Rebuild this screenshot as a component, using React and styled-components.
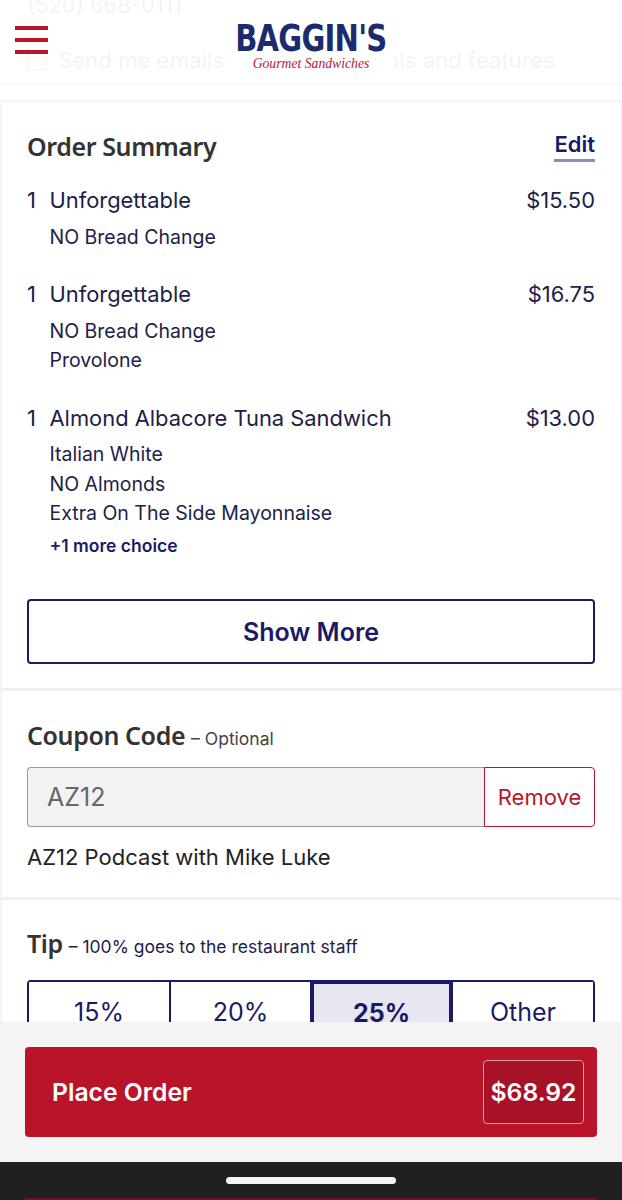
import React from "react";
import styled, { createGlobalStyle } from "styled-components";

const GlobalStyle = createGlobalStyle`
	html, body {
		margin: 0;
		padding: 0;
		background: #ffffff;
	}
	* {
		box-sizing: border-box;
	}
`;

const NAVY = "#1a1a66";
const RED = "#b91429";
const TEXT = "#1c2148";

const items = [
	{ name: "Unforgettable", price: "$15.50", choices: ["NO Bread Change"] },
	{ name: "Unforgettable", price: "$16.75", choices: ["NO Bread Change", "Provolone"] },
	{
		name: "Almond Albacore Tuna Sandwich",
		price: "$13.00",
		choices: ["Italian White", "NO Almonds", "Extra On The Side Mayonnaise"],
		more: "+1 more choice"
	}
];

const tips = [
	{ label: "15%" },
	{ label: "20%" },
	{ label: "25%", selected: true },
	{ label: "Other" }
];

const Screen = styled.div`
	position: relative;
	width: 622px;
	height: 1200px;
	overflow: hidden;
	background: #ffffff;
	font-family: Inter, "Liberation Sans", sans-serif;
	color: ${TEXT};
`;

/* Translucent header that the contact form scrolls under */
const Header = styled.header`
	position: absolute;
	top: 0;
	left: 0;
	right: 0;
	height: 84px;
	display: flex;
	justify-content: center;
	border-bottom: 1px solid #f6f6f6;
	background: rgba(255, 255, 255, 0.94);
`;

const Burger = styled.div`
	position: absolute;
	left: 15px;
	top: 26px;
	width: 33px;
	height: 28px;
	display: flex;
	flex-direction: column;
	justify-content: space-between;
`;

const BurgerBar = styled.span`
	height: 4px;
	background: ${RED};
`;

const Logo = styled.div`
	width: 164px;
	background: #ffffff;
	display: flex;
	flex-direction: column;
	align-items: center;
	padding-top: 20px;
`;

const LogoName = styled.div`
	font-family: "DejaVu Sans", sans-serif;
	font-weight: 700;
	font-size: 38px;
	line-height: 36px;
	letter-spacing: -1px;
	color: #1b2c6e;
	white-space: nowrap;
	transform: scaleX(0.765);
`;

const LogoTag = styled.div`
	font-family: "Liberation Serif", serif;
	font-style: italic;
	font-size: 13.7px;
	line-height: 15px;
	color: #c0143c;
	white-space: nowrap;
`;

const Contact = styled.section`
	height: 112px;
	margin-top: -10px;
	border-bottom: 2px solid #f3f3f3;
	padding-left: 27px;
	color: #333333;
	font-size: 22px;
	line-height: 30px;
`;

const OptIn = styled.div`
	display: flex;
	align-items: center;
	gap: 11px;
	margin-top: 25px;
	letter-spacing: 0.12px;
	white-space: nowrap;
`;

const OptInBox = styled.span`
	width: 20px;
	height: 20px;
	border: 1px solid #555555;
`;

const Section = styled.section`
	padding: ${(p) => p.$pad};
	border-left: 2px solid #f5f5f5;
	border-right: 2px solid #f5f5f5;
	border-bottom: 3px solid #f1f1f1;
`;

const TitleRow = styled.div`
	display: flex;
	align-items: center;
	justify-content: space-between;
`;

const Title = styled.h2`
	margin: 0;
	font-family: "Noto Sans", sans-serif;
	font-size: 25px;
	line-height: 34px;
	letter-spacing: -0.4px;
	font-weight: 600;
	color: #333333;
`;

const InlineTitle = styled(Title)`
	display: flex;
	align-items: baseline;
	gap: 6px;
`;

const TitleNote = styled.span`
	font-family: Inter, sans-serif;
	font-size: 17.5px;
	line-height: 1;
	letter-spacing: 0;
	font-weight: 400;
	color: ${(p) => p.$color || "#444444"};
`;

const EditLink = styled.a`
	font-size: 22px;
	font-weight: 600;
	line-height: 29px;
	color: ${NAVY};
	border-bottom: 3px solid #8e8cbc;
`;

const ItemList = styled.div`
	margin-top: 22px;
	display: flex;
	flex-direction: column;
	gap: 27px;
`;

const ItemRow = styled.div`
	display: grid;
	grid-template-columns: 22.5px 1fr auto;
	font-size: 21.9px;
	line-height: 30px;
`;

const Choices = styled.div`
	grid-column: 2 / 4;
	margin-top: 7.5px;
	font-size: 19.5px;
	line-height: 29.5px;
`;

const MoreChoices = styled.div`
	margin-top: 2px;
	font-size: 17.5px;
	font-weight: 600;
	color: ${NAVY};
`;

const ShowMore = styled.button`
	display: block;
	width: 100%;
	height: 65px;
	margin-top: 39px;
	border: 2px solid ${NAVY};
	border-radius: 4px;
	background: #ffffff;
	color: ${NAVY};
	font-family: Inter, sans-serif;
	font-size: 25px;
	font-weight: 600;
`;

const CouponField = styled.div`
	display: flex;
	height: 60px;
	margin-top: 15px;
`;

const CouponValue = styled.div`
	flex: 1;
	display: flex;
	align-items: center;
	padding-left: 19px;
	background: #f2f2f2;
	border: 1.5px solid #9a9a9a;
	border-right: 0;
	border-radius: 4px 0 0 4px;
	color: #666666;
	font-size: 25px;
`;

const RemoveButton = styled.button`
	width: 111px;
	border: 1.5px solid ${RED};
	border-radius: 0 4px 4px 0;
	background: #ffffff;
	color: ${RED};
	font-family: Inter, sans-serif;
	font-size: 22px;
	padding: 0;
`;

const CouponNote = styled.p`
	margin: 15px 0 0;
	font-size: 22px;
	line-height: 30px;
	color: #222222;
`;

const TipRow = styled.div`
	display: grid;
	grid-template-columns: repeat(4, 1fr);
	height: 64px;
	margin-top: 20px;
	border: 2px solid ${NAVY};
	border-radius: 4px;
`;

const TipOption = styled.div`
	display: flex;
	align-items: center;
	justify-content: center;
	font-size: 25px;
	color: ${NAVY};
	font-weight: ${(p) => (p.$selected ? 700 : 400)};
	background: ${(p) => (p.$selected ? "#e7e7f1" : "#ffffff")};
	border-left: ${(p) => (p.$selected ? "3px" : "1px")} solid ${NAVY};
	border-right: ${(p) => (p.$selected ? "3px" : "1px")} solid ${NAVY};
	border-top: ${(p) => (p.$selected ? "2px" : "0")} solid ${NAVY};

	&:first-child {
		border-left: 0;
	}
	&:last-child {
		border-right: 0;
	}
`;

/* Checkout dock and phone nav bar stay on top of the scrolled page */
const Dock = styled.div`
	position: absolute;
	left: 0;
	right: 0;
	bottom: 0;
`;

const OrderBar = styled.div`
	height: 140px;
	padding: 25px;
	background: #f4f4f5;
`;

const PlaceOrder = styled.div`
	height: 90px;
	display: flex;
	align-items: center;
	justify-content: space-between;
	padding: 0 13px 0 27px;
	border-radius: 4px;
	background: ${RED};
	color: #ffffff;
	font-size: 24.7px;
	font-weight: 600;
`;

const Price = styled.div`
	width: 101px;
	height: 64px;
	display: flex;
	align-items: center;
	justify-content: center;
	border: 1px solid #e09aa4;
	border-radius: 4px;
	background: #a81226;
`;

const NavBar = styled.div`
	position: relative;
	height: 38px;
	display: flex;
	justify-content: center;
	padding-top: 15px;
	background: #202020;
`;

const HomeIndicator = styled.div`
	width: 170px;
	height: 7px;
	border-radius: 4px;
	background: #f4f4f4;
`;

/* Sliver of the page showing below the nav bar */
const BottomSliver = styled.div`
	position: absolute;
	left: 25px;
	right: 25px;
	bottom: 0;
	height: 2px;
	background: #6e1420;
`;

export default function App() {
	return (
		<Screen>
			<GlobalStyle />
			<Contact>
				(520) 668-0111
				<OptIn>
					<OptInBox />
					Send me emails about latest deals and features
				</OptIn>
			</Contact>

			<Section $pad="27px 25px 24px">
				<TitleRow>
					<Title>Order Summary</Title>
					<EditLink>Edit</EditLink>
				</TitleRow>
				<ItemList>
					{items.map((item, i) => (
						<ItemRow key={i}>
							<span>1</span>
							<span>{item.name}</span>
							<span>{item.price}</span>
							<Choices>
								{item.choices.map((c) => (
									<div key={c}>{c}</div>
								))}
								{item.more && <MoreChoices>{item.more}</MoreChoices>}
							</Choices>
						</ItemRow>
					))}
				</ItemList>
				<ShowMore>Show More</ShowMore>
			</Section>

			<Section $pad="27px 25px 25px">
				<InlineTitle>
					Coupon Code <TitleNote>– Optional</TitleNote>
				</InlineTitle>
				<CouponField>
					<CouponValue>AZ12</CouponValue>
					<RemoveButton>Remove</RemoveButton>
				</CouponField>
				<CouponNote>AZ12 Podcast with Mike Luke</CouponNote>
			</Section>

			<Section $pad="26px 25px 26px">
				<InlineTitle>
					Tip <TitleNote $color="#1c2148">– 100% goes to the restaurant staff</TitleNote>
				</InlineTitle>
				<TipRow>
					{tips.map((t) => (
						<TipOption key={t.label} $selected={t.selected}>
							{t.label}
						</TipOption>
					))}
				</TipRow>
			</Section>

			<Header>
				<Burger>
					<BurgerBar />
					<BurgerBar />
					<BurgerBar />
				</Burger>
				<Logo>
					<LogoName>BAGGIN'S</LogoName>
					<LogoTag>Gourmet Sandwiches</LogoTag>
				</Logo>
			</Header>

			<Dock>
				<OrderBar>
					<PlaceOrder>
						Place Order
						<Price>$68.92</Price>
					</PlaceOrder>
				</OrderBar>
				<NavBar>
					<HomeIndicator />
					<BottomSliver />
				</NavBar>
			</Dock>
		</Screen>
	);
}
